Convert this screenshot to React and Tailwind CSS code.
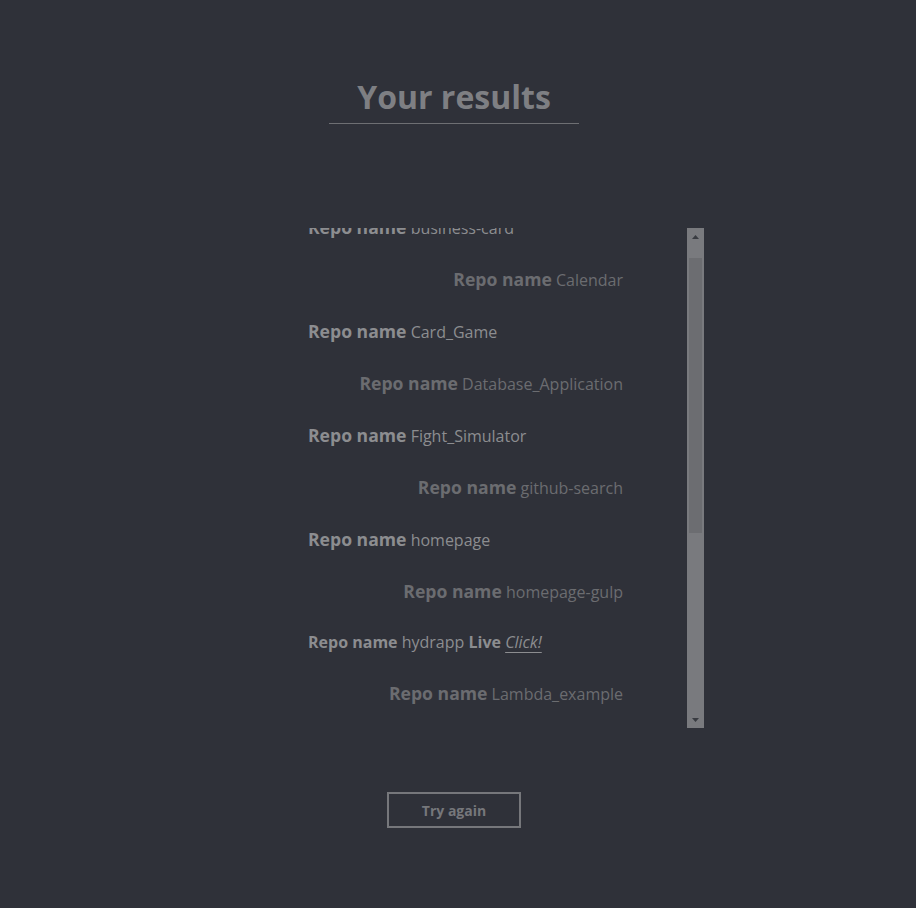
import React, { useEffect, useRef } from 'react';

const repos = [
  { name: 'business-card' },
  { name: 'Calendar' },
  { name: 'Card_Game' },
  { name: 'Database_Application' },
  { name: 'Fight_Simulator' },
  { name: 'github-search' },
  { name: 'homepage' },
  { name: 'homepage-gulp' },
  { name: 'hydrapp', live: true },
  { name: 'Lambda_example' },
  { name: 'Landing_Page' },
  { name: 'Memory_Game' },
  { name: 'portfolio' },
  { name: 'todo-list' },
  { name: 'weather-app' },
  { name: 'wikipedia-viewer' },
];

const RepoRow = ({ repo, index }) => {
  const left = index % 2 === 0;
  return (
    <li
      className={`flex items-center text-[16px] ${repo.live ? 'h-[50px]' : 'h-[52px]'} ${left ? 'justify-start text-[#8c8d90]' : 'justify-end text-[#6b6c70]'}`}
    >
      {repo.live ? (
        <span>
          <b className="font-bold">Repo name</b> {repo.name} <b className="font-bold">Live</b>{' '}
          <a className="italic underline underline-offset-[4px] decoration-[#8c8d90]">Click!</a>
        </span>
      ) : (
        <span>
          <b className="font-bold text-[17.6px]">Repo name</b> {repo.name}
        </span>
      )}
    </li>
  );
};

// the list's scrollbar, drawn to match the classic one in the screenshot
const ScrollBar = () => (
  <div className="w-[17px] h-[500px] bg-[#797a7e] flex flex-col shrink-0">
    <div className="h-[17px] flex items-center justify-center">
      <svg width="7" height="4" viewBox="0 0 7 4">
        <path d="M3.5 0 L7 4 L0 4 Z" fill="#393b41" />
      </svg>
    </div>
    <div className="flex-1 px-[2px]">
      <div className="mt-[13px] h-[275px] bg-[#6c6d71]" />
    </div>
    <div className="h-[17px] flex items-center justify-center">
      <svg width="7" height="4" viewBox="0 0 7 4">
        <path d="M0 0 L7 0 L3.5 4 Z" fill="#393b41" />
      </svg>
    </div>
  </div>
);

export default function App() {
  const listRef = useRef(null);

  useEffect(() => {
    if (listRef.current) listRef.current.scrollTop = 27;
  }, []);

  return (
    <div className="min-h-[908px] bg-[#2f3139] font-['Open_Sans',sans-serif] flex flex-col">
      {/* Heading */}
      <div className="ml-[329px] w-[250px] mt-[73px] border-b border-[#6e6f73] pb-[2px] text-center">
        <h1 className="text-[32px] font-bold leading-[48px] text-[#7e7f83]">Your results</h1>
      </div>

      {/* Results list */}
      <div className="ml-[300px] mt-[104px] w-[404px] h-[500px] flex">
        <div
          ref={listRef}
          className="flex-1 h-full overflow-y-scroll [scrollbar-width:none] [&::-webkit-scrollbar]:hidden"
        >
          <ul className="ml-2 w-[315px]">
            {repos.map((repo, index) => (
              <RepoRow key={repo.name} repo={repo} index={index} />
            ))}
          </ul>
        </div>
        <ScrollBar />
      </div>

      {/* Retry */}
      <div className="flex justify-center pr-2 mt-16">
        <button className="w-[134px] h-[36px] border-2 border-[#76777b] text-[#76777b] text-[14px] font-bold">
          Try again
        </button>
      </div>
    </div>
  );
}
